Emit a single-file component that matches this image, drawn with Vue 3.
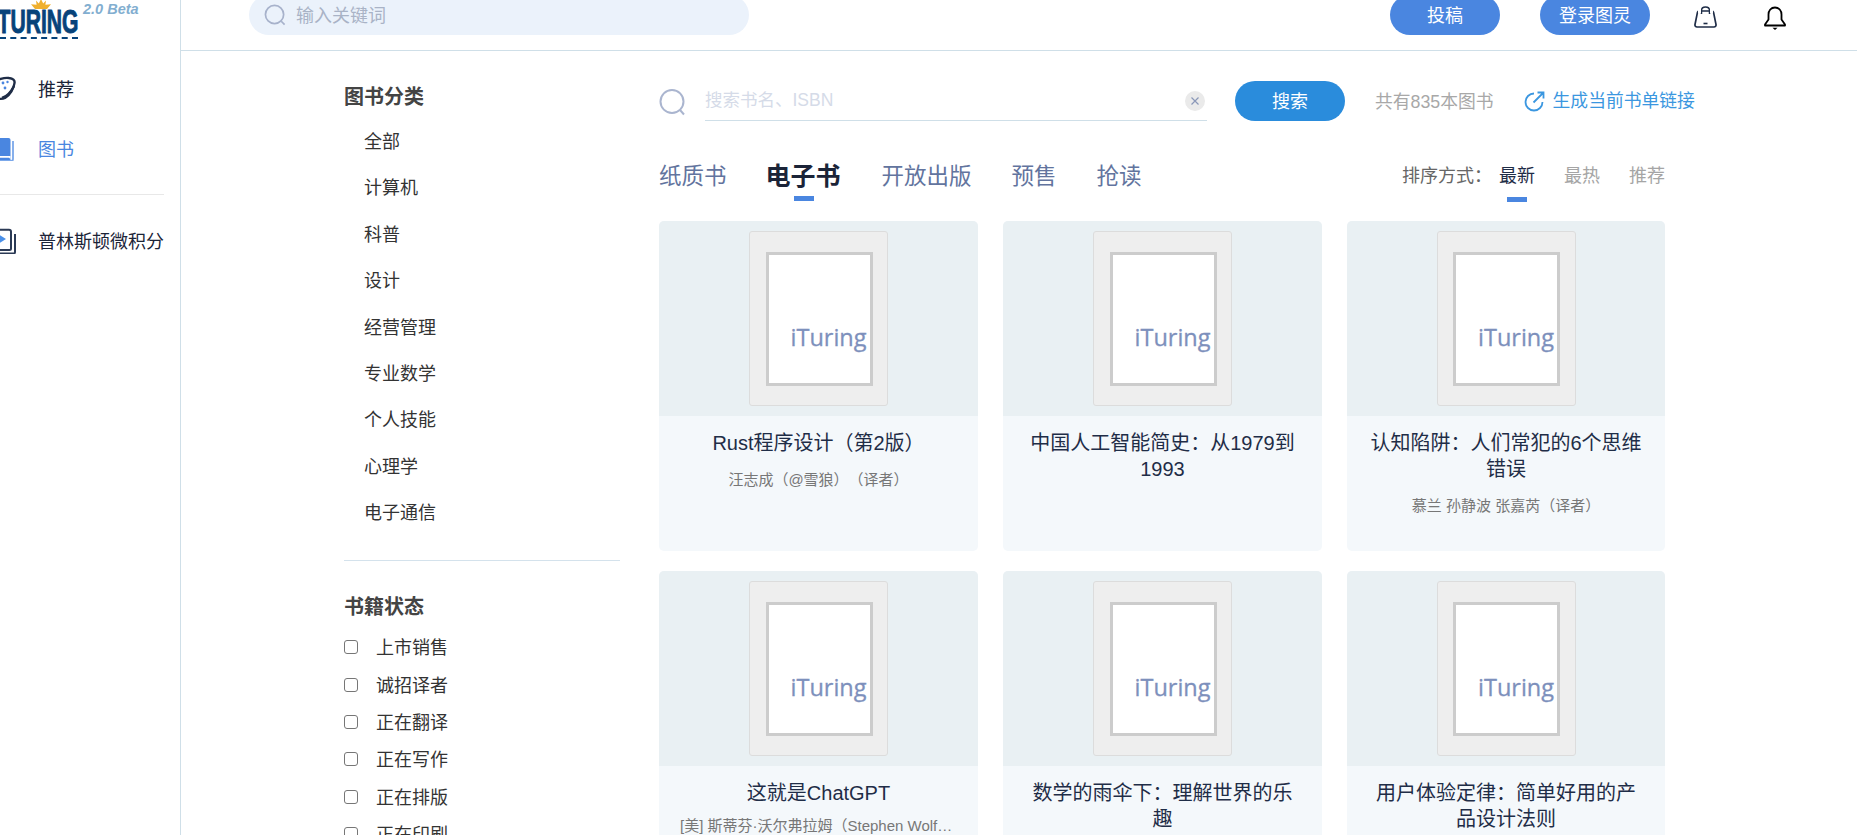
<script setup>
const navTop = [
  { label: '推荐', key: 'rec' },
  { label: '图书', key: 'book', active: true }
]
const categories = ['全部', '计算机', '科普', '设计', '经营管理', '专业数学', '个人技能', '心理学', '电子通信']
const statuses = ['上市销售', '诚招译者', '正在翻译', '正在写作', '正在排版', '正在印刷']
const tabs = [
  { label: '纸质书' },
  { label: '电子书', active: true },
  { label: '开放出版' },
  { label: '预售' },
  { label: '抢读' }
]
const sorts = [{ label: '最新', active: true }, { label: '最热' }, { label: '推荐' }]
const books = [
  { title: 'Rust程序设计（第2版）', author: '汪志成（@雪狼）（译者）' },
  { title: '中国人工智能简史：从1979到1993', author: '' },
  { title: '认知陷阱：人们常犯的6个思维错误', author: '慕兰 孙静波 张嘉芮（译者）' },
  { title: '这就是ChatGPT', author: '[美] 斯蒂芬·沃尔弗拉姆（Stephen Wolfram）（作者）', clip: true },
  { title: '数学的雨伞下：理解世界的乐趣', author: '' },
  { title: '用户体验定律：简单好用的产品设计法则', author: '' }
]
</script>

<template>
  <div class="page">
    <aside class="sidebar">
      <div class="logo">
        <div class="brand">
          <svg class="crown" viewBox="0 0 20 11" width="20" height="11">
            <path d="M10 0l2.200 4.500L15 1.500l-.6 4.300L20 5.200 16 10H4L0 5.200l5.600.6L5 1.500l2.800 3z" fill="#f0b02e" />
          </svg>
          <span class="brand-text">TURING</span>
          <span class="brand-rule"></span>
        </div>
        <span class="beta">2.0 Beta</span>
      </div>
      <nav class="nav">
        <a v-for="item in navTop" :key="item.key" class="nav-item" :class="{ active: item.active }">
          <svg v-if="item.key === 'rec'" class="nav-icon" viewBox="0 0 38 26" width="38" height="26">
            <path d="M-6 5C0 5 3 2 9 3c4 .5 6 2 5.500 5C14 13 10 20 5 23c-3 1.500-8 1-11-1" fill="none" stroke="#1f2d47" stroke-width="2.400" />
            <path d="M14 11C11 17 8 21 2 23" fill="none" stroke="#1f2d47" stroke-width="2.400" />
            <circle cx="3" cy="8" r="1.400" fill="#4a86e0" />
            <circle cx="7.500" cy="7" r="1.200" fill="#4a86e0" />
            <circle cx="5" cy="13" r="1.400" fill="#4a86e0" />
          </svg>
          <svg v-else class="nav-icon" viewBox="0 0 38 26" width="38" height="26">
            <path d="M-5 3H8.500a2 2 0 0 1 2 2V25H-5z" fill="#4a86e0" />
            <path d="M10.500 21H-5v1.700H9l1.500 1.300z" fill="#fff" />
            <path d="M-4 26H11a2 2 0 0 0 2-2V6" fill="none" stroke="#7ba8ea" stroke-width="1.800" />
          </svg>
          <span>{{ item.label }}</span>
        </a>
        <div class="nav-rule"></div>
        <a class="nav-item nudge">
          <svg class="nav-icon" viewBox="0 0 38 26" width="38" height="26">
            <path d="M-4 1.800H9a2 2 0 0 1 2 2V20.500a1.500 1.500 0 0 1-1.500 1.500H-4z" fill="none" stroke="#2b3a55" stroke-width="2" />
            <path d="M-4 25.500H13.500a1.500 1.500 0 0 0 1.500-1.500V6" fill="none" stroke="#2b3a55" stroke-width="2" />
            <path d="M-1 6.500 6 11-1 15.500z" fill="#4a90e8" />
          </svg>
          <span>普林斯顿微积分</span>
        </a>
      </nav>
    </aside>

    <div class="right">
      <header class="topbar">
        <div class="top-search">
          <svg viewBox="0 0 24 24" width="23" height="23" class="glass">
            <circle cx="11" cy="11" r="9.500" fill="none" stroke="#a7b2cb" stroke-width="1.800" />
            <path d="M18 18l3.500 3.500" stroke="#a7b2cb" stroke-width="1.800" fill="none" />
          </svg>
          <span class="lift">输入关键词</span>
        </div>
        <button class="pill first">投稿</button>
        <button class="pill second">登录图灵</button>
        <svg class="bag" viewBox="0 0 23 22" width="23" height="22">
          <path d="M5 5h13c.8 0 1.300.5 1.500 1.200l2.500 12.300c.2 1.300-.6 2.500-2 2.500H3c-1.400 0-2.200-1.200-2-2.500L3.500 6.200C3.700 5.500 4.200 5 5 5z" fill="none" stroke="#1f2d47" stroke-width="1.700" />
          <path d="M7.500 8V4.500C7.500 2.500 9 1 11.500 1s4 1.500 4 3.500V8" fill="none" stroke="#1f2d47" stroke-width="1.500" />
          <path d="M9.500 17.500h4" stroke="#1f2d47" stroke-width="1.600" />
          <rect x="4" y="3" width="3" height="4" fill="#fff" />
          <rect x="16" y="3" width="3" height="4" fill="#fff" />
        </svg>
        <svg class="bell" viewBox="0 0 22 24" width="22" height="24">
          <path d="M11 1.500c-4 0-6.500 3-6.500 7v5L1 18.500v1h20v-1l-3.500-5v-5c0-4-2.500-7-6.500-7z" fill="none" stroke="#000" stroke-width="1.800" stroke-linejoin="round" />
          <path d="M8.500 21.800h5L11 24z" fill="#000" />
        </svg>
      </header>

      <div class="content">
        <section class="filters">
          <h3 class="filter-title">图书分类</h3>
          <ul class="cats">
            <li v-for="c in categories" :key="c">{{ c }}</li>
          </ul>
          <div class="filter-rule"></div>
          <h3 class="filter-title">书籍状态</h3>
          <div class="statuses">
            <label v-for="s in statuses" :key="s" class="status">
              <input type="checkbox" />
              <span class="lift">{{ s }}</span>
            </label>
          </div>
        </section>

        <main class="main">
          <div class="search-row">
            <svg class="search-glass" viewBox="0 0 27 27" width="27" height="27">
              <circle cx="13" cy="12.500" r="11.500" fill="none" stroke="#aab5cf" stroke-width="2" />
              <path d="M21 21l4 4.500" stroke="#aab5cf" stroke-width="2" fill="none" />
            </svg>
            <div class="search-input">
              <span class="placeholder">搜索书名、ISBN</span>
              <span class="clear">
                <svg viewBox="0 0 10 10" width="10" height="10">
                  <path d="M1.500 1.500l7 7M8.500 1.500l-7 7" stroke="#8a97b8" stroke-width="1.200" />
                </svg>
              </span>
            </div>
            <button class="search-btn">搜索</button>
            <span class="count lift">共有835本图书</span>
            <svg class="link-icon" viewBox="0 0 21 21" width="21" height="21">
              <path d="M10 2.500a8.500 8.500 0 1 0 8.500 8.500" fill="none" stroke="#3b97e0" stroke-width="1.800" />
              <path d="M9.500 11.500 19 2M13.500 1.500H19.500V7.500" fill="none" stroke="#3b97e0" stroke-width="1.800" />
            </svg>
            <span class="link-text">生成当前书单链接</span>
          </div>

          <div class="tab-row">
            <a v-for="t in tabs" :key="t.label" class="tab" :class="{ active: t.active }">{{ t.label }}</a>
            <div class="sorter">
              <span class="sort-label">排序方式：</span>
              <a v-for="s in sorts" :key="s.label" class="sort" :class="{ active: s.active }">{{ s.label }}</a>
            </div>
          </div>

          <div class="grid">
            <article v-for="b in books" :key="b.title" class="card">
              <div class="card-top">
                <div class="cover">
                  <div class="cover-inner">iTuring</div>
                </div>
              </div>
              <div class="card-body">
                <div class="title">{{ b.title }}</div>
                <div v-if="b.author" class="author" :class="{ clip: b.clip }">{{ b.author }}</div>
              </div>
            </article>
          </div>
        </main>
      </div>
    </div>
  </div>
</template>

<style>
html, body { margin: 0; overflow: hidden; background: #fff; }
</style>

<style scoped>
.page {
  width: 1857px;
  height: 835px;
  overflow: hidden;
  display: flex;
  font-family: "Liberation Sans", "Noto Sans CJK SC", sans-serif;
  font-size: 18px;
  color: #333;
  background: #fff;
  text-spacing-trim: space-all;
}
.lift { padding-bottom: 2px; }
.sidebar {
  width: 181px;
  flex: none;
  box-sizing: border-box;
  border-right: 1px solid #cfdfe8;
  overflow: hidden;
}
.logo {
  height: 51px;
  display: flex;
  align-items: flex-start;
  overflow: hidden;
}
.brand {
  position: relative;
  width: 78px;
  height: 39px;
  flex: none;
}
.brand-text {
  position: absolute;
  right: 0;
  top: 4px;
  font-size: 33px;
  line-height: 36px;
  font-weight: 700;
  color: #07437a;
  -webkit-text-stroke: 1px #07437a;
  transform: scaleX(0.64);
  transform-origin: right center;
}
.crown { position: absolute; left: 31px; top: -1px; }
.brand-rule {
  position: absolute;
  left: 0;
  right: 0;
  top: 37px;
  border-top: 2px dashed #07437a;
}
.beta {
  margin: 0 0 0 5px;
  font-size: 14.500px;
  line-height: 18px;
  font-weight: 700;
  font-style: italic;
  color: #82aed0;
  white-space: nowrap;
}
.nav { padding-top: 7px; }
.nav-item {
  display: flex;
  align-items: center;
  height: 60px;
  color: #1b2438;
  white-space: nowrap;
}
.nav-item.nudge span { padding-bottom: 2px; }
.nav-item.active { color: #4a86e0; }
.nav-icon { flex: none; }
.nav-rule { width: 164px; margin: 16px 0; border-top: 1px solid #e8e8e8; }

.right { flex: 1; min-width: 0; }
.topbar {
  height: 51px;
  box-sizing: border-box;
  border-bottom: 1px solid #cfdfe8;
  display: flex;
  align-items: flex-start;
}
.top-search {
  margin: -5px 0 0 68px;
  width: 500px;
  height: 40px;
  border-radius: 20px;
  background: #ebf2fb;
  display: flex;
  align-items: center;
  color: #a9b3c6;
  padding-left: 15px;
  box-sizing: border-box;
}
.glass { margin-right: 9px; flex: none; }
.pill {
  margin-top: -5px;
  width: 110px;
  height: 40px;
  border: 0;
  border-radius: 20px;
  background: #4a86e0;
  color: #fff;
  font: inherit;
  padding: 0 0 2px;
}
.pill.first { margin-left: 641px; }
.pill.second { margin-left: 40px; }
.bag { margin: 6px 0 0 44px; flex: none; }
.bell { margin: 6px 0 0 47px; flex: none; }

.content { display: flex; padding-left: 163px; }
.filters { width: 276px; flex: none; padding-top: 33px; }
.filter-title {
  margin: 0;
  font-size: 20px;
  line-height: 26px;
  font-weight: 700;
  color: #444;
}
.cats { list-style: none; margin: 9px 0 0; padding: 0 0 0 20px; }
.cats li { height: 46.400px; line-height: 46.400px; color: #333; }
.filter-rule { margin: 23px 0 33px; border-top: 1px solid #d4e2ec; }
.statuses { margin-top: 9px; }
.status { display: flex; align-items: center; height: 37.400px; color: #333; }
.status input {
  appearance: none;
  width: 14px;
  height: 14px;
  margin: 0 18px 0 0;
  border: 1px solid #767676;
  border-radius: 3px;
  background: #fff;
  box-sizing: border-box;
  flex: none;
}

.main { width: 1006px; margin-left: 39px; flex: none; padding-top: 30px; }
.search-row { display: flex; align-items: center; height: 40px; white-space: nowrap; }
.search-glass { flex: none; margin-top: 3px; }
.search-input {
  width: 502px;
  height: 40px;
  margin-left: 19px;
  box-sizing: border-box;
  border-bottom: 1px solid #cfdfe8;
  display: flex;
  align-items: center;
  justify-content: space-between;
  flex: none;
  padding: 0 2px 0 0;
}
.placeholder { color: #d5dbe8; font-size: 17.500px; padding-bottom: 4px; }
.clear {
  width: 20px;
  height: 20px;
  border-radius: 50%;
  background: #eaeaea;
  display: flex;
  align-items: center;
  justify-content: center;
}
.search-btn {
  width: 110px;
  height: 40px;
  margin-left: 28px;
  flex: none;
  border: 0;
  padding: 0 0 2px;
  border-radius: 20px;
  background: #2a8cdc;
  color: #fff;
  font: inherit;
}
.count { margin-left: 30px; color: #a8a8a8; flex: none; font-size: 17.800px; }
.link-icon { margin-left: 30px; flex: none; }
.link-text { margin-left: 8px; color: #3b97e0; flex: none; font-size: 17.800px; padding-bottom: 4px; }

.tab-row {
  display: flex;
  align-items: center;
  height: 40px;
  box-sizing: border-box;
  padding-bottom: 8px;
  margin: 37px 0 23px;
  white-space: nowrap;
}
.tab {
  position: relative;
  margin-right: 40px;
  font-size: 22.500px;
  color: #62749e;
}
.tab.active {
  margin-left: -1px;
  margin-right: 41px;
  font-size: 25px;
  font-weight: 700;
  color: #1b2438;
}
.tab.active::after {
  content: "";
  position: absolute;
  left: 50%;
  bottom: -9px;
  width: 20px;
  height: 5px;
  margin-left: -9px;
  background: #4a86e0;
}
.sorter { margin-left: auto; display: flex; align-items: center; }
.sort-label { color: #666; margin-right: 7px; }
.sort { position: relative; margin-left: 29px; color: #a5a5a5; }
.sort-label + .sort { margin-left: 0; }
.sort.active { color: #1f2d47; }
.sort.active::after {
  content: "";
  position: absolute;
  left: 8px;
  bottom: -15px;
  width: 20px;
  height: 5px;
  background: #4a86e0;
}

.grid {
  display: grid;
  grid-template-columns: 319px 319px 318px;
  gap: 20px 25px;
}
.card {
  height: 330px;
  border-radius: 5px;
  overflow: hidden;
  background: #f4f8fb;
}
.card-top {
  height: 195px;
  background: #e9f0f3;
  display: flex;
  justify-content: center;
  align-items: center;
}
.cover {
  width: 139px;
  height: 175px;
  box-sizing: border-box;
  background: #eee;
  border: 1px solid #dcdcdc;
  border-radius: 3px;
  display: flex;
  align-items: center;
  justify-content: center;
}
.cover-inner {
  width: 107px;
  height: 134px;
  margin-left: 1px;
  box-sizing: border-box;
  border: 3px solid #ccc;
  background: #fff;
  display: flex;
  align-items: center;
  justify-content: flex-end;
  padding: 36px 3px 0 0;
  font-family: "Open Sans", sans-serif;
  font-size: 23.500px;
  color: #7d90bc;
  -webkit-text-stroke: 0.3px #7d90bc;
  white-space: nowrap;
}
.card-body { padding: 14px 21px 0; text-align: center; }
.title { font-size: 20px; line-height: 26px; color: #1f2d47; }
.author {
  margin-top: 13px;
  font-size: 15px;
  line-height: 21px;
  color: #777;
}
.author.clip {
  margin-top: 9px;
  white-space: nowrap;
  overflow: hidden;
  text-overflow: ellipsis;
}
</style>
